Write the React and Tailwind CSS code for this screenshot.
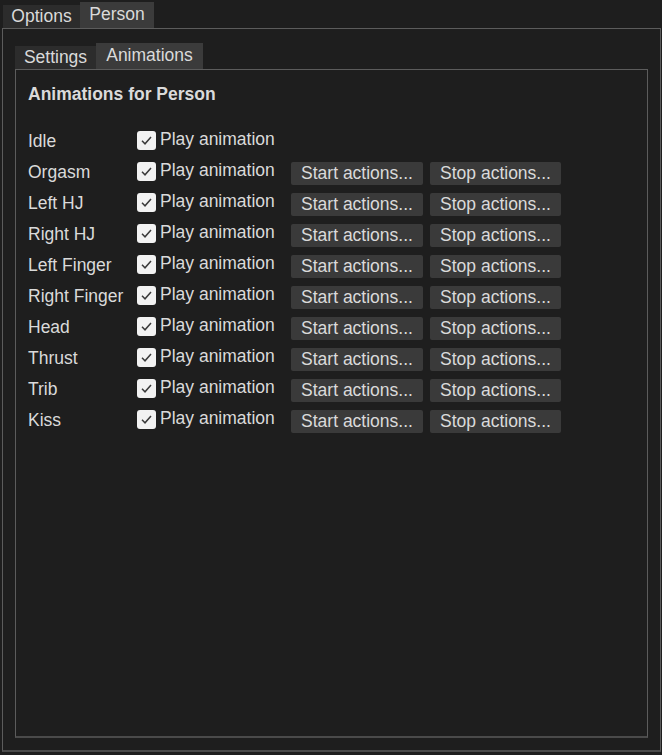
import React from "react";

const rows = [
  ["Idle", false],
  ["Orgasm", true],
  ["Left HJ", true],
  ["Right HJ", true],
  ["Left Finger", true],
  ["Right Finger", true],
  ["Head", true],
  ["Thrust", true],
  ["Trib", true],
  ["Kiss", true],
];

function Check() {
  return (
    <span className="flex h-[19px] w-[19px] items-center justify-center rounded-[3px] bg-[#f2f2f2]">
      <svg width="13" height="13" viewBox="0 0 13 13">
        <path d="M2 6.8 L5 9.8 L11 3" fill="none" stroke="#3a3a3a" strokeWidth="1.5" />
      </svg>
    </span>
  );
}

export default function App() {
  return (
    <div
      className="h-[755px] w-[662px] bg-[#1e1e1e] text-[#dadada] text-[17.5px] leading-none"
      style={{ fontFamily: '"Liberation Sans", Arial, sans-serif' }}
    >
      <div className="flex h-[28px] items-end pl-[3px]">
        <div className="flex h-[23px] w-[77px] items-center justify-center bg-[#2c2c2c]">Options</div>
        <div className="flex h-[26px] w-[74px] items-center justify-center bg-[#3b3b3b]">Person</div>
      </div>
      <div className="ml-[2px] mr-[1px] flex h-[724px] flex-col border border-b-2 border-[#5c5c5c] border-b-[#4a4a4a] pl-[12px] pr-[12px] pt-[14px] pb-[12px]">
        <div className="flex h-[26px] items-end">
          <div className="flex h-[23px] w-[81px] items-center justify-center bg-[#2c2c2c]">Settings</div>
          <div className="flex h-[26px] w-[107px] items-center justify-center bg-[#3b3b3b]">Animations</div>
        </div>
        <div className="flex flex-1 flex-col border border-b-2 border-[#5c5c5c] border-b-[#4a4a4a] pl-[12px] pt-[16px]">
          <div className="font-bold">Animations for Person</div>
          <div className="mt-[27px] flex flex-col gap-[8px]">
            {rows.map(([name, btns]) => (
              <div key={name} className="flex h-[23px] items-center">
                <div className="w-[109px]">{name}</div>
                <div className="flex w-[154px] items-center gap-[4px] pb-[4px]">
                  <Check />
                  <span>Play animation</span>
                </div>
                {btns && (
                  <div className="flex gap-[7px]">
                    <div className="flex h-[23px] w-[132px] items-center justify-center rounded-[2px] bg-[#3a3a3a] pt-[1px]">Start actions...</div>
                    <div className="flex h-[23px] w-[131px] items-center justify-center rounded-[2px] bg-[#3a3a3a] pt-[1px]">Stop actions...</div>
                  </div>
                )}
              </div>
            ))}
          </div>
        </div>
      </div>
    </div>
  );
}
